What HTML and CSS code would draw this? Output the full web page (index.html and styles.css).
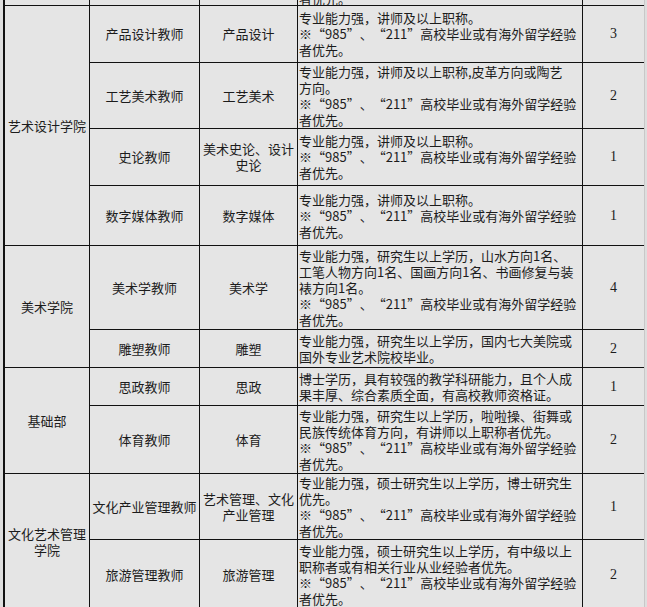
FILE: index.html
```html
<!DOCTYPE html>
<html lang="zh-CN">
<head>
<meta charset="utf-8">
<title>招聘岗位</title>
<link rel="stylesheet" href="styles.css">
</head>
<body>
<div class="sheet">
  <div class="grid">
    <div class="c c-top"></div>
    <div class="c c-top"></div>
    <div class="c c-top"></div>
    <div class="c c-top c-req"><span class="cut">者优先。</span></div>
    <div class="c c-top"></div>

    <div class="c dept span4">艺术设计学院</div>
    <div class="c">产品设计教师</div>
    <div class="c">产品设计</div>
    <div class="c c-req"><p class="txt">专业能力强，讲师及以上职称。<br>※<span class="fw">“</span>985<span class="fw">”</span>、<span class="fw">“</span>211<span class="fw">”</span>高校毕业或有海外留学经验<br>者优先。</p></div>
    <div class="c num">3</div>

    <div class="c">工艺美术教师</div>
    <div class="c">工艺美术</div>
    <div class="c c-req"><p class="txt">专业能力强，讲师及以上职称,皮革方向或陶艺<br>方向。<br>※<span class="fw">“</span>985<span class="fw">”</span>、<span class="fw">“</span>211<span class="fw">”</span>高校毕业或有海外留学经验<br>者优先。</p></div>
    <div class="c num">2</div>

    <div class="c">史论教师</div>
    <div class="c">美术史论、设计<br>史论</div>
    <div class="c c-req"><p class="txt">专业能力强，讲师及以上职称。<br>※<span class="fw">“</span>985<span class="fw">”</span>、<span class="fw">“</span>211<span class="fw">”</span>高校毕业或有海外留学经验<br>者优先。</p></div>
    <div class="c num">1</div>

    <div class="c">数字媒体教师</div>
    <div class="c">数字媒体</div>
    <div class="c c-req"><p class="txt">专业能力强，讲师及以上职称。<br>※<span class="fw">“</span>985<span class="fw">”</span>、<span class="fw">“</span>211<span class="fw">”</span>高校毕业或有海外留学经验<br>者优先。</p></div>
    <div class="c num">1</div>

    <div class="c dept span2">美术学院</div>
    <div class="c">美术学教师</div>
    <div class="c">美术学</div>
    <div class="c c-req"><p class="txt">专业能力强，研究生以上学历，山水方向1名、<br>工笔人物方向1名、国画方向1名、书画修复与装<br>裱方向1名。<br>※<span class="fw">“</span>985<span class="fw">”</span>、<span class="fw">“</span>211<span class="fw">”</span>高校毕业或有海外留学经验<br>者优先。</p></div>
    <div class="c num">4</div>

    <div class="c">雕塑教师</div>
    <div class="c">雕塑</div>
    <div class="c c-req"><p class="txt">专业能力强，研究生以上学历，国内七大美院或<br>国外专业艺术院校毕业。</p></div>
    <div class="c num">2</div>

    <div class="c dept span2">基础部</div>
    <div class="c">思政教师</div>
    <div class="c">思政</div>
    <div class="c c-req"><p class="txt">博士学历，具有较强的教学科研能力，且个人成<br>果丰厚、综合素质全面，有高校教师资格证。</p></div>
    <div class="c num">1</div>

    <div class="c">体育教师</div>
    <div class="c">体育</div>
    <div class="c c-req"><p class="txt">专业能力强，研究生以上学历，啦啦操、街舞或<br>民族传统体育方向，有讲师以上职称者优先。<br>※<span class="fw">“</span>985<span class="fw">”</span>、<span class="fw">“</span>211<span class="fw">”</span>高校毕业或有海外留学经验<br>者优先。</p></div>
    <div class="c num">2</div>

    <div class="c dept span2">文化艺术管理<br>学院</div>
    <div class="c">文化产业管理教师</div>
    <div class="c">艺术管理、文化<br>产业管理</div>
    <div class="c c-req"><p class="txt">专业能力强，硕士研究生以上学历，博士研究生<br>优先。<br>※<span class="fw">“</span>985<span class="fw">”</span>、<span class="fw">“</span>211<span class="fw">”</span>高校毕业或有海外留学经验<br>者优先。</p></div>
    <div class="c num">1</div>

    <div class="c">旅游管理教师</div>
    <div class="c">旅游管理</div>
    <div class="c c-req"><p class="txt">专业能力强，硕士研究生以上学历，有中级以上<br>职称者或有相关行业从业经验者优先。<br>※<span class="fw">“</span>985<span class="fw">”</span>、<span class="fw">“</span>211<span class="fw">”</span>高校毕业或有海外留学经验<br>者优先。</p></div>
    <div class="c num">2</div>
  </div>
</div>
</body>
</html>
```

FILE: styles.css
```css
html, body {
  margin: 0;
  padding: 0;
  background: #dedede;
}

body {
  font-family: "Noto Sans CJK SC", "Noto Sans", sans-serif;
  font-size: 13px;
  line-height: 16px;
  color: #1c1c1c;
}

.sheet {
  width: 647px;
  height: 607px;
  overflow: hidden;
  padding-left: 3px;
  box-sizing: border-box;
}

.grid {
  display: grid;
  grid-template-columns: 84px 109px 97px 284px 61px;
  grid-template-rows: 5px 56px 65px 56px 59px 83px 37px 37px 67px 65px 70px;
  gap: 1px;
  background: #111;
  padding-left: 2px;
  width: 639px;
  border-right: 1px solid #c8c8c8;
}

.c {
  background: #e5e5e5;
  display: flex;
  align-items: center;
  justify-content: center;
  text-align: center;
  overflow: hidden;
}

.c-req {
  justify-content: flex-start;
  text-align: left;
  padding-left: 1px;
}

.txt {
  margin: 0;
  white-space: nowrap;
}

.fw {
  font-variant-east-asian: full-width;
  display: inline-block;
  width: 13px;
  text-align: center;
}

.num {
  font-family: "Liberation Serif", serif;
  font-size: 14px;
}

.c-top {
  align-items: flex-end;
}

.cut {
  display: block;
  margin-bottom: -2px;
}

.dept {
  grid-column: 1;
}

.span4 {
  grid-row: span 4;
}

.span2 {
  grid-row: span 2;
}
```
